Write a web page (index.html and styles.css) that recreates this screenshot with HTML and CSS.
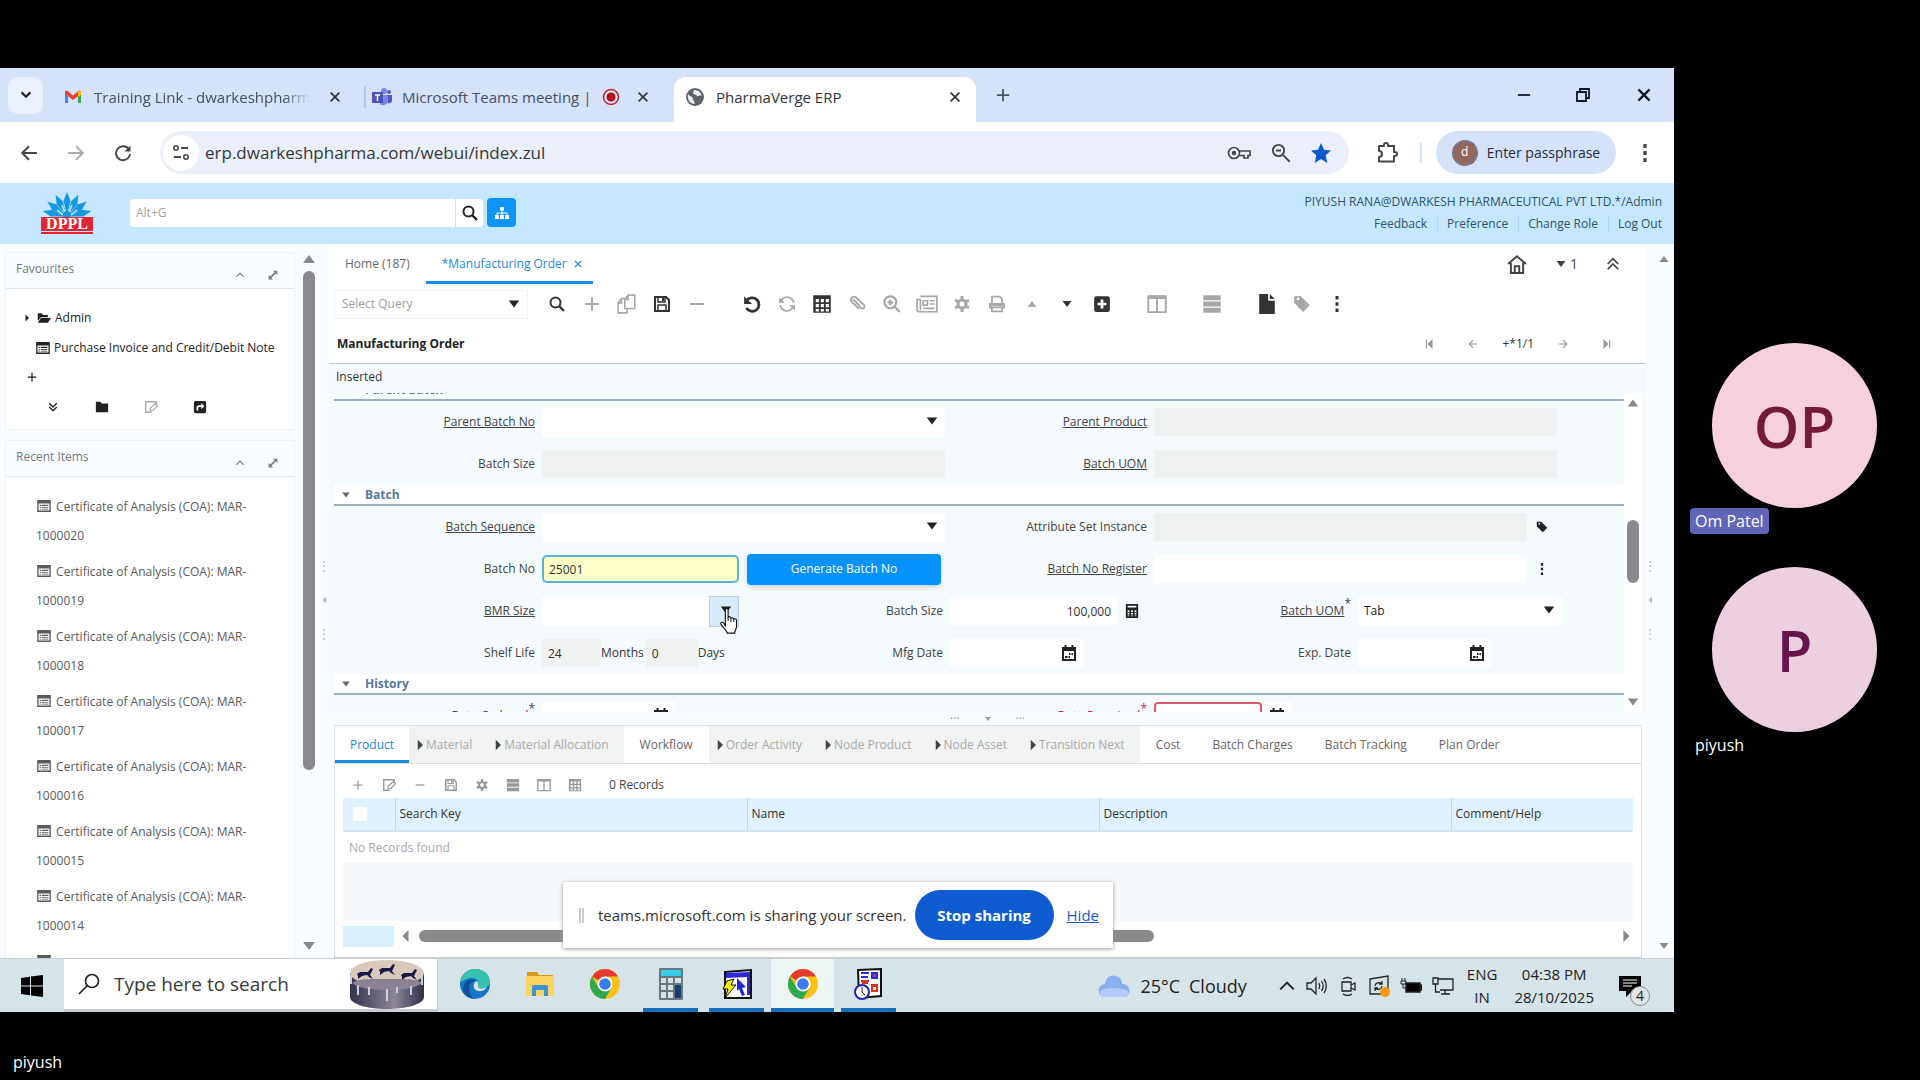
FILE: index.html
```html
<!DOCTYPE html>
<html lang="en">
<head>
    <meta charset="UTF-8">
    <meta name="viewport" content="width=device-width, initial-scale=1.0">
    <title>PharmaVerge ERP</title>
    <link rel="stylesheet" href="styles.css">
</head>
<body>
    <svg class="sprite" aria-hidden="true">
        <symbol id="x" viewBox="0 0 16 16"><path d="M3 3l10 10M13 3L3 13" fill="none" stroke="currentColor" stroke-width="2"/></symbol>
        <symbol id="plus" viewBox="0 0 16 16"><path d="M8 1v14M1 8h14" fill="none" stroke="currentColor" stroke-width="2"/></symbol>
        <symbol id="minus" viewBox="0 0 16 16"><path d="M1 8h14" stroke="currentColor" stroke-width="2"/></symbol>
        <symbol id="down" viewBox="0 0 16 16"><path d="M2 4h12l-6 8z" fill="currentColor"/></symbol>
        <symbol id="up" viewBox="0 0 16 16"><path d="M2 12h12L8 4z" fill="currentColor"/></symbol>
        <symbol id="right" viewBox="0 0 16 16"><path d="M5 1v14l7-7z" fill="currentColor"/></symbol>
        <symbol id="left" viewBox="0 0 16 16"><path d="M12 1v14L5 8z" fill="currentColor"/></symbol>
        <symbol id="search" viewBox="0 0 16 16"><circle cx="6.5" cy="6.5" r="5" fill="none" stroke="currentColor" stroke-width="2"/><path d="M10 10l5 5" stroke="currentColor" stroke-width="2.4"/></symbol>
        <symbol id="zoomin" viewBox="0 0 16 16"><circle cx="6.5" cy="6.5" r="5.3" fill="none" stroke="currentColor" stroke-width="2"/><path d="M10 10l5 5M4 6.500h5M6.500 4v5" stroke="currentColor" stroke-width="2"/></symbol>
        <symbol id="zoomout" viewBox="0 0 16 16"><circle cx="6" cy="6" r="4.500" fill="none" stroke="currentColor" stroke-width="1.500"/><path d="M9.500 9.500l5.500 5.500M4 6h4" stroke="currentColor" stroke-width="1.500"/></symbol>
        <symbol id="copy" viewBox="0 0 18 18"><path d="M7 5L10 1h6v12H7zM7 5h3V1M7 4L4 4 1 8v9h8v-4M1 8h3V4" fill="none" stroke="currentColor" stroke-width="1.400"/></symbol>
        <symbol id="save" viewBox="0 0 16 16"><path d="M1 1h11l3 3v11H1z" fill="none" stroke="currentColor" stroke-width="2"/><path d="M4 1v5h7V1M4 15V9h8v6" fill="none" stroke="currentColor" stroke-width="1.500"/><path d="M8 2h2v3H8z" fill="currentColor"/></symbol>
        <symbol id="undo" viewBox="0 0 16 16"><path d="M3 5.500a6 6 0 1 1 0 6" fill="none" stroke="currentColor" stroke-width="2.500"/><path d="M1 1v7h7z" fill="currentColor"/></symbol>
        <symbol id="refresh" viewBox="0 0 16 16"><path d="M14 7A6 6 0 0 0 3.500 4L2 6M2 9a6 6 0 0 0 10.500 3L14 10" fill="none" stroke="currentColor" stroke-width="1.600"/><path d="M1 2v5h5zM15 14V9h-5z" fill="currentColor"/></symbol>
        <symbol id="grid" viewBox="0 0 16 16"><path fill-rule="evenodd" d="M1 1h14v14H1zM3 4v2.500h2.500V4zM7 4v2.500h2.500V4zM11 4v2.500h2.500V4zM3 8v2.500h2.500V8zM7 8v2.500h2.500V8zM11 8v2.500h2.500V8zM3 12v2h2.500v-2zM7 12v2h2.500v-2zM11 12v2h2.500v-2z" fill="currentColor"/></symbol>
        <symbol id="clip" viewBox="0 0 16 16"><path d="M4 3l8 9a2 2 0 0 0 3-3L7 1.500A3 3 0 0 0 3 6l7 7M6 5l5 5" fill="none" stroke="currentColor" stroke-width="1.800"/></symbol>
        <symbol id="news" viewBox="0 0 20 16"><path d="M4 1h15v14H3a2 2 0 0 1-2-2V4h3v10M6.500 5h4v4h-4zM12.500 5H17M12.500 8H17M6.500 12H17" fill="none" stroke="currentColor" stroke-width="1.500"/></symbol>
        <symbol id="gear" viewBox="0 0 16 16"><circle cx="8" cy="8" r="4" fill="none" stroke="currentColor" stroke-width="3"/><path d="M8 0v4M8 12v4M1 4l3.500 2M11.500 10L15 12M1 12l3.500-2M11.500 6L15 4" stroke="currentColor" stroke-width="3"/></symbol>
        <symbol id="print" viewBox="0 0 16 16"><path d="M3.500 8V1.500h7l2 2V8M3.500 11h9v3.500h-9z" fill="none" stroke="currentColor" stroke-width="1.600"/><path d="M1 7h14v5h-2v-2H3v2H1z" fill="currentColor"/></symbol>
        <symbol id="plusbox" viewBox="0 0 16 16"><rect x="1" y="1" width="14" height="14" rx="2" fill="currentColor"/><path d="M8 4v8M4 8h8" stroke="#fff" stroke-width="2.400"/></symbol>
        <symbol id="columns" viewBox="0 0 16 16"><path d="M1 2h14v12.500H1zM8 3v11" fill="none" stroke="currentColor" stroke-width="1.500"/><path d="M1 1h14v3H1z" fill="currentColor"/></symbol>
        <symbol id="rows" viewBox="0 0 16 16"><path d="M1 1h14v4H1zM1 6h14v4H1zM1 11h14v4H1z" fill="currentColor"/></symbol>
        <symbol id="file" viewBox="0 0 16 18"><path d="M1 0h8v6h6v12H1zM10.500 0L15 4.500h-4.500z" fill="currentColor"/></symbol>
        <symbol id="tag" viewBox="0 0 16 16"><path fill-rule="evenodd" d="M1 1h6l8 8-6 6-8-8zM3.500 2.500v2h2v-2z" fill="currentColor"/></symbol>
        <symbol id="dots" viewBox="0 0 16 16"><path d="M8 0v3.500M8 6.200v3.500M8 12.500V16" stroke="currentColor" stroke-width="3"/></symbol>
        <symbol id="card" viewBox="0 0 16 14"><path d="M1 1h14v12H1z" fill="none" stroke="currentColor" stroke-width="1.500"/><path d="M1 1h14v3H1zM3 5.500h1.500V7H3zM3 8h1.500v1H3zM3 10h1.500v1H3zM5.500 5.500H13V7H5.500zM5.500 8H13v1H5.500zM5.500 10H13v1H5.500z" fill="currentColor"/></symbol>
        <symbol id="chev2" viewBox="0 0 16 16"><path d="M2 8l6-6 6 6M2 14l6-6 6 6" fill="none" stroke="currentColor" stroke-width="2"/></symbol>
        <symbol id="chev" viewBox="0 0 16 16"><path d="M2 11l6-6 6 6" fill="none" stroke="currentColor" stroke-width="1.800"/></symbol>
        <symbol id="expand" viewBox="0 0 16 16"><path d="M8 1h7v7zM1 8v7h7z" fill="currentColor"/><path d="M3 13L13 3" stroke="currentColor" stroke-width="2.600"/></symbol>
        <symbol id="folder" viewBox="0 0 16 14"><path d="M1 1h5l2 2h7v10H1z" fill="currentColor"/></symbol>
        <symbol id="folderopen" viewBox="0 0 18 14"><path d="M1 1h5l2 2h6v3H5l-4 5zM5 7h13l-4 6H1z" fill="currentColor"/></symbol>
        <symbol id="edit" viewBox="0 0 16 16"><path d="M9 14H2V2h12v4" fill="none" stroke="currentColor" stroke-width="1.600"/><path d="M7 12V9.500L13 4l2.500 2.500L10 12z" fill="none" stroke="currentColor" stroke-width="1.400"/></symbol>
        <symbol id="share" viewBox="0 0 16 16"><rect x="1" y="1" width="14" height="14" rx="2" fill="currentColor"/><path d="M5 12V9a2 2 0 0 1 2-2h3" fill="none" stroke="#fff" stroke-width="2"/><path d="M9.500 3.500L13 7l-3.500 3.500z" fill="#fff"/></symbol>
        <symbol id="home" viewBox="0 0 18 18"><path d="M1 9l8-7 8 7M3.500 8v9h11V8M7 17v-6h4v6" fill="none" stroke="currentColor" stroke-width="1.800"/></symbol>
        <symbol id="arrowl" viewBox="0 0 16 16"><path d="M15 8H2M8 2L2 8l6 6" fill="none" stroke="currentColor" stroke-width="1.800"/></symbol>
        <symbol id="arrowr" viewBox="0 0 16 16"><path d="M1 8h13M8 2l6 6-6 6" fill="none" stroke="currentColor" stroke-width="1.800"/></symbol>
        <symbol id="first" viewBox="0 0 16 16"><path d="M4.500 2v12M12 3v10L7 8z" fill="currentColor" stroke="currentColor" stroke-width="1.500"/></symbol>
        <symbol id="last" viewBox="0 0 16 16"><path d="M11.500 2v12M4 3v10l5-5z" fill="currentColor" stroke="currentColor" stroke-width="1.500"/></symbol>
        <symbol id="calc" viewBox="0 0 16 16"><path fill-rule="evenodd" d="M1 0h14v16H1zM3 2v2h10V2zM3 7v2h2V7zM7 7v2h2V7zM11 7v2h2V7zM3 10v2h2v-2zM7 10v2h2v-2zM11 10v2h2v-2zM3 13v1h2v-1zM7 13v1h2v-1zM11 13v1h2v-1z" fill="currentColor"/></symbol>
        <symbol id="cal" viewBox="0 0 16 16"><path fill-rule="evenodd" d="M1 2h2.500V0h2v2h5V0h2v2H15v14H1zM3 6v8h10V6z" fill="currentColor"/><path d="M4 11h2.500v2H4zM7.500 11h1.500v2H7.500zM8 8h1.500v2H8zM10.500 8H12v2h-1.500z" fill="currentColor"/></symbol>
        <symbol id="chrome" viewBox="0 0 32 32"><circle cx="16" cy="16" r="15" fill="#fbc116"/><path d="M16 16L3 8.500A15 15 0 0 1 29 8.500H16z" fill="#e33b2e"/><path d="M3 8.500A15 15 0 0 0 16 31l6.500-11.300L16 16 9.500 19.700z" fill="#2da94f"/><circle cx="16" cy="16" r="7.500" fill="#fff"/><circle cx="16" cy="16" r="5.800" fill="#3b7ded"/></symbol>
    </svg>

    <div class="meeting">
        <main class="screen">
            <!-- browser -->
            <div class="tabstrip">
                <button class="tab-search" aria-label="Search tabs"><svg class="flip s14" viewBox="0 0 16 16"><path d="M3 11l5-5 5 5" fill="none" stroke="currentColor" stroke-width="2.500"/></svg></button>
                <div class="btab first">
                    <svg class="s18" viewBox="0 0 18 14"><path d="M1 2v11h3V6z" fill="#4285f4"/><path d="M17 2v11h-3V6z" fill="#34a853"/><path d="M1 3V1l2-.500 6 5 6-5 2 .500v3L9 10 1 4z" fill="#ea4335"/><path d="M14 2l2-1.500L17 2v3l-3 2z" fill="#fbbc04"/></svg>
                    <span class="btab-name fade">Training Link - dwarkeshpharma</span>
                    <button aria-label="Close tab"><svg class="s14"><use href="#x"/></svg></button>
                </div>
                <div class="btab second">
                    <svg class="s20" viewBox="0 0 20 20"><circle cx="12" cy="4" r="3" fill="#7b83eb"/><circle cx="17" cy="5" r="2" fill="#5059c9"/><path d="M8 8h8v7a5 5 0 0 1-8 2z" fill="#7b83eb"/><path d="M16 8h4v6a3 3 0 0 1-4 2z" fill="#5059c9"/><rect y="5" width="11" height="11" rx="1" fill="#4b53bc"/><path d="M3 8h5M5.500 8v6" stroke="#fff" stroke-width="1.500"/></svg>
                    <span class="btab-name">Microsoft Teams meeting |</span>
                    <svg class="s18 rec" viewBox="0 0 18 18"><circle cx="9" cy="9" r="7.500" fill="none" stroke="#c5222a" stroke-width="1.500"/><circle cx="9" cy="9" r="4.500" fill="#b3141c"/></svg>
                    <button aria-label="Close tab"><svg class="s14"><use href="#x"/></svg></button>
                </div>
                <div class="btab active">
                    <svg class="s20" viewBox="0 0 20 20"><circle cx="10" cy="10" r="9" fill="#5f6368"/><path d="M3 7c2 3 5 2 5 5l2 5C5 17 2 13 3 7zM9 3c4 0 7 2 8 6-2-2-3 1-5 0-1-2-4-1-4-3z" fill="#e8eaed"/></svg>
                    <span class="btab-name">PharmaVerge ERP</span>
                    <button aria-label="Close tab"><svg class="s14"><use href="#x"/></svg></button>
                </div>
                <button class="newtab" aria-label="New tab"><svg class="s14"><use href="#plus"/></svg></button>
                <div class="winbtns">
                    <button aria-label="Minimise"><svg class="s14"><use href="#minus"/></svg></button>
                    <button aria-label="Restore"><svg class="s14" viewBox="0 0 14 14"><path d="M1 4h9v9H1zM4 4V1h9v9h-3" fill="none" stroke="#101828" stroke-width="1.800"/></svg></button>
                    <button aria-label="Close"><svg class="s18"><use href="#x"/></svg></button>
                </div>
            </div>
            <div class="navbar">
                <div class="navbtns">
                    <button aria-label="Back"><svg class="s18"><use href="#arrowl"/></svg></button>
                    <button aria-label="Forward" class="off"><svg class="s18"><use href="#arrowr"/></svg></button>
                    <button aria-label="Reload"><svg class="s18" viewBox="0 0 18 18"><path d="M15 5.500A7 7 0 1 0 16 10" fill="none" stroke="currentColor" stroke-width="1.900"/><path d="M16.500 1.500v6h-6z" fill="currentColor"/></svg></button>
                </div>
                <div class="omnibox">
                    <button class="tune" aria-label="Site information"><svg class="s18" viewBox="0 0 18 18"><path d="M9 4h7M2 13h7" stroke="currentColor" stroke-width="2"/><circle cx="4" cy="4" r="2.200" fill="none" stroke="currentColor" stroke-width="1.600"/><circle cx="14" cy="13" r="2.200" fill="none" stroke="currentColor" stroke-width="1.600"/></svg></button>
                    <input type="text" aria-label="Address" value="erp.dwarkeshpharma.com/webui/index.zul">
                    <button aria-label="Passwords"><svg class="key" viewBox="0 0 24 14"><circle cx="7" cy="7" r="5.500" fill="none" stroke="currentColor" stroke-width="1.700"/><circle cx="7" cy="7" r="2.200" fill="currentColor"/><path d="M12 5h11v4.500h-2V12h-4V9.500h-5" fill="none" stroke="currentColor" stroke-width="1.700"/></svg></button>
                    <button aria-label="Zoom"><svg class="s20"><use href="#zoomout"/></svg></button>
                    <button aria-label="Bookmark" class="star"><svg class="s20" viewBox="0 0 20 20"><path d="M10 0l3 6.800 7 .7-5.300 4.800L16.300 20 10 16l-6.300 4 1.600-7.700L0 7.500l7-.7z" fill="currentColor"/></svg></button>
                </div>
                <button class="puzzle" aria-label="Extensions"><svg class="s22" viewBox="0 0 22 22"><path d="M3 4h5V3a2 2 0 0 1 4 0v1h6v6h1a2 2 0 0 1 0 4h-1v5.500H3V15c4 0 4-6 0-6z" fill="none" stroke="#444746" stroke-width="2" stroke-linejoin="round"/></svg></button>
                <button class="profile"><span class="pic">d</span>Enter passphrase</button>
                <button class="menu" aria-label="Menu"><svg class="s18"><use href="#dots"/></svg></button>
            </div>

            <!-- erp header -->
            <header class="erp-head">
                <svg class="logo" viewBox="0 0 52 42" role="img" aria-label="DPPL">
                    <g fill="#1599de"><path id="petal" d="M26 23L22.500 9 26 0l3.500 9z"/><use href="#petal" transform="rotate(27 26 25)"/><use href="#petal" transform="rotate(-27 26 25)"/><use href="#petal" transform="rotate(52 26 25)"/><use href="#petal" transform="rotate(-52 26 25)"/><use href="#petal" transform="rotate(76 26 25)"/><use href="#petal" transform="rotate(-76 26 25)"/></g>
                    <path d="M26 26L16 18M26 26l10-8M26 26l-5-13M26 26l5-13" stroke="#c6e8fe" stroke-width="1.500"/>
                    <circle cx="26" cy="23" r="4" fill="#1599de"/>
                    <path d="M0 25h52v14H0zM0 40h52v2H0z" fill="#e32636"/>
                    <text x="26" y="37" text-anchor="middle">DPPL</text>
                </svg>
                <form class="gsearch">
                    <input type="text" aria-label="Global search" placeholder="Alt+G">
                    <button type="button" aria-label="Search"><svg class="s16"><use href="#search"/></svg></button>
                </form>
                <button class="sitemap" aria-label="Menu tree"><svg class="s14" viewBox="0 0 14 12"><path d="M5 0h4v3.500H5zM0 8h4v4H0zM5 8h4v4H5zM10 8h4v4h-4z" fill="#fff"/><path d="M7 3v5M2 8V6h10v2" fill="none" stroke="#fff"/></svg></button>
                <div class="user">
                    <p>PIYUSH RANA@DWARKESH PHARMACEUTICAL PVT LTD.*/Admin</p>
                    <nav><a href="#">Feedback</a><a href="#">Preference</a><a href="#">Change Role</a><a href="#">Log Out</a></nav>
                </div>
            </header>

            <div class="desk">
                <aside class="sidebar">
                    <section class="box">
                        <h2>Favourites <span><svg class="s10"><use href="#chev"/></svg><svg class="s10"><use href="#expand"/></svg></span></h2>
                        <div class="fav">
                            <a href="#" class="fav-admin"><svg class="s8"><use href="#right"/></svg><svg class="s14"><use href="#folderopen"/></svg>Admin</a>
                            <a href="#" class="fav-doc"><svg class="s14"><use href="#card"/></svg>Purchase Invoice and Credit/Debit Note</a>
                            <button class="fav-add" aria-label="Add"><svg class="s10"><use href="#plus"/></svg></button>
                            <div class="fav-tools">
                                <button aria-label="Expand"><svg class="flip s10"><use href="#chev2"/></svg></button>
                                <button aria-label="Folder"><svg class="s14"><use href="#folder"/></svg></button>
                                <button aria-label="Edit" class="off"><svg class="s14"><use href="#edit"/></svg></button>
                                <button aria-label="Open"><svg class="s14"><use href="#share"/></svg></button>
                            </div>
                        </div>
                    </section>
                    <section class="box recent">
                        <h2>Recent Items <span><svg class="s10"><use href="#chev"/></svg><svg class="s10"><use href="#expand"/></svg></span></h2>
                        <ul>
                            <li><a href="#"><svg class="s14"><use href="#card"/></svg> Certificate of Analysis (COA): MAR-1000020</a></li>
                            <li><a href="#"><svg class="s14"><use href="#card"/></svg> Certificate of Analysis (COA): MAR-1000019</a></li>
                            <li><a href="#"><svg class="s14"><use href="#card"/></svg> Certificate of Analysis (COA): MAR-1000018</a></li>
                            <li><a href="#"><svg class="s14"><use href="#card"/></svg> Certificate of Analysis (COA): MAR-1000017</a></li>
                            <li><a href="#"><svg class="s14"><use href="#card"/></svg> Certificate of Analysis (COA): MAR-1000016</a></li>
                            <li><a href="#"><svg class="s14"><use href="#card"/></svg> Certificate of Analysis (COA): MAR-1000015</a></li>
                            <li><a href="#"><svg class="s14"><use href="#card"/></svg> Certificate of Analysis (COA): MAR-1000014</a></li>
                            <li><a href="#"><svg class="s14"><use href="#card"/></svg></a></li>
                        </ul>
                    </section>
                </aside>
                <div class="vscroll side-scroll"><svg class="s16"><use href="#up"/></svg><i></i><svg class="s16"><use href="#down"/></svg></div>
                <div class="splitter"><span>⋮</span><svg class="s8"><use href="#left"/></svg><span>⋮</span></div>

                <div class="work">
                    <div class="wtabs">
                        <a href="#">Home (187)</a>
                        <a href="#" class="on">*Manufacturing Order<svg class="s10"><use href="#x"/></svg></a>
                        <div class="wtools">
                            <button aria-label="Home"><svg class="s20"><use href="#home"/></svg></button>
                            <button><svg class="s12"><use href="#down"/></svg>1</button>
                            <button aria-label="Collapse"><svg class="s14"><use href="#chev2"/></svg></button>
                        </div>
                    </div>
                    <div class="toolbar">
                        <div class="combo query"><select aria-label="Select Query"><option>Select Query</option></select><svg class="s14"><use href="#down"/></svg></div>
                        <button aria-label="Find"><svg class="s16"><use href="#search"/></svg></button>
                        <button class="off" aria-label="New"><svg class="s16"><use href="#plus"/></svg></button>
                        <button class="off" aria-label="Copy"><svg class="s20"><use href="#copy"/></svg></button>
                        <button aria-label="Save"><svg class="s16"><use href="#save"/></svg></button>
                        <button class="off" aria-label="Delete"><svg class="s16"><use href="#minus"/></svg></button>
                        <button class="sep" aria-label="Undo"><svg class="s18"><use href="#undo"/></svg></button>
                        <button class="off" aria-label="Refresh"><svg class="s18"><use href="#refresh"/></svg></button>
                        <button aria-label="Grid"><svg class="s20"><use href="#grid"/></svg></button>
                        <button class="off" aria-label="Attachment"><svg class="s16"><use href="#clip"/></svg></button>
                        <button class="off" aria-label="Zoom"><svg class="s18"><use href="#zoomin"/></svg></button>
                        <button class="off" aria-label="Report"><svg class="s22"><use href="#news"/></svg></button>
                        <button class="off" aria-label="Process"><svg class="s16"><use href="#gear"/></svg></button>
                        <button class="off" aria-label="Print"><svg class="s18"><use href="#print"/></svg></button>
                        <button class="off" aria-label="Parent"><svg class="s12"><use href="#up"/></svg></button>
                        <button aria-label="Detail"><svg class="s12"><use href="#down"/></svg></button>
                        <button aria-label="Add record"><svg class="s18"><use href="#plusbox"/></svg></button>
                        <button class="sep off" aria-label="Columns"><svg class="s20"><use href="#columns"/></svg></button>
                        <button class="sep off" aria-label="Rows"><svg class="s20"><use href="#rows"/></svg></button>
                        <button class="sep" aria-label="Document"><svg class="s20"><use href="#file"/></svg></button>
                        <button class="off" aria-label="Label"><svg class="s18"><use href="#tag"/></svg></button>
                        <button aria-label="More"><svg class="s16"><use href="#dots"/></svg></button>
                    </div>
                    <div class="titlebar">
                        <h1>Manufacturing Order</h1>
                        <div class="pager">
                            <button aria-label="First"><svg class="s12"><use href="#first"/></svg></button>
                            <button aria-label="Previous"><svg class="s10"><use href="#arrowl"/></svg></button>
                            <span>+*1/1</span>
                            <button aria-label="Next"><svg class="s10"><use href="#arrowr"/></svg></button>
                            <button aria-label="Last"><svg class="s12"><use href="#last"/></svg></button>
                        </div>
                    </div>
                    <p class="status">Inserted</p>

                    <div class="formwrap">
                        <form class="form">
                            <h3 class="cut">Parent Batch</h3>
                            <div class="fields">
                                <label for="pbn"><u>Parent Batch No</u></label>
                                <div class="combo w2"><select id="pbn"><option></option></select><svg class="s14"><use href="#down"/></svg></div>
                                <label for="pp"><u>Parent Product</u></label>
                                <input class="w2 ro" id="pp" type="text" readonly>
                                <label for="pbs">Batch Size</label>
                                <input class="w2 ro" id="pbs" type="text" readonly>
                                <label for="pbu"><u>Batch UOM</u></label>
                                <input class="w2 ro" id="pbu" type="text" readonly>
                            </div>
                            <h3><svg class="s10"><use href="#down"/></svg>Batch</h3>
                            <div class="fields">
                                <label for="bs"><u>Batch Sequence</u></label>
                                <div class="combo w2"><select id="bs"><option></option></select><svg class="s14"><use href="#down"/></svg></div>
                                <label for="asi">Attribute Set Instance</label>
                                <div class="w2 withicon"><input class="ro" id="asi" type="text" readonly><button type="button" aria-label="Attributes"><svg class="s12"><use href="#tag"/></svg></button></div>

                                <label for="bno">Batch No</label>
                                <input class="focused" id="bno" type="text" value="25001">
                                <button type="button" class="primary">Generate Batch No</button>
                                <label for="bnr"><u>Batch No Register</u></label>
                                <div class="w2 withicon"><input id="bnr" type="text"><button type="button" aria-label="More"><svg class="s12"><use href="#dots"/></svg></button></div>

                                <label for="bmr"><u>BMR Size</u></label>
                                <div class="combo hover"><select id="bmr"><option></option></select><svg class="s14"><use href="#down"/></svg>
                                    <svg class="cursor" viewBox="0 0 22 30"><path d="M6 3c0-2 3-2 3 0v8c1-1 3-1 3 1 1-1 3 0 3 1 2-1 3 0 3 2v6c0 3-2 4-2 7H8c0-3-5-6-7-10 0-2 2-2 3-1l2 3z" fill="#fff" stroke="#111" stroke-width="1.200"/><path d="M9 11v4M12 12v4M15 13v3" stroke="#111"/></svg>
                                </div>
                                <label for="bsz">Batch Size</label>
                                <div class="withicon size"><input id="bsz" type="text" value="100,000"><button type="button" aria-label="Calculator"><svg class="s14"><use href="#calc"/></svg></button></div>
                                <label for="uom"><u>Batch UOM</u><sup>*</sup></label>
                                <div class="combo"><select id="uom"><option>Tab</option></select><svg class="s14"><use href="#down"/></svg></div>

                                <label for="slm">Shelf Life</label>
                                <div class="shelf"><input class="ro" id="slm" type="text" value="24" readonly><span>Months</span><input class="ro" type="text" value="0" aria-label="Days" readonly><span>Days</span></div>
                                <label for="mfg">Mfg Date</label>
                                <div class="withicon date"><input id="mfg" type="text"><button type="button" aria-label="Calendar"><svg class="s16"><use href="#cal"/></svg></button></div>
                                <label for="exp">Exp. Date</label>
                                <div class="withicon date"><input id="exp" type="text"><button type="button" aria-label="Calendar"><svg class="s16"><use href="#cal"/></svg></button></div>
                            </div>
                            <h3><svg class="s10"><use href="#down"/></svg>History</h3>
                            <div class="fields">
                                <label for="dto">Date Ordered<sup>*</sup></label>
                                <div class="withicon date"><input id="dto" type="text" value="28/10/2025"><button type="button" aria-label="Calendar"><svg class="s16"><use href="#cal"/></svg></button></div>
                                <label class="red promised" for="dtp">Date Promised<sup>*</sup></label>
                                <div class="withicon date"><input class="error" id="dtp" type="text"><button type="button" aria-label="Calendar"><svg class="s16"><use href="#cal"/></svg></button></div>
                            </div>
                        </form>
                        <div class="vscroll form-scroll"><svg class="s14"><use href="#up"/></svg><i></i><svg class="s14"><use href="#down"/></svg></div>
                    </div>
                    <div class="hsplit"><span>···</span><svg class="s8"><use href="#down"/></svg><span>···</span></div>

                    <section class="detail">
                        <nav class="dtabs">
                            <a href="#" class="on">Product</a>
                            <a href="#" class="dis"><svg class="s12"><use href="#right"/></svg>Material</a>
                            <a href="#" class="dis"><svg class="s12"><use href="#right"/></svg>Material Allocation</a>
                            <a href="#" class="wf">Workflow</a>
                            <a href="#" class="dis"><svg class="s12"><use href="#right"/></svg>Order Activity</a>
                            <a href="#" class="dis"><svg class="s12"><use href="#right"/></svg>Node Product</a>
                            <a href="#" class="dis"><svg class="s12"><use href="#right"/></svg>Node Asset</a>
                            <a href="#" class="dis"><svg class="s12"><use href="#right"/></svg>Transition Next</a>
                            <a href="#">Cost</a>
                            <a href="#">Batch Charges</a>
                            <a href="#">Batch Tracking</a>
                            <a href="#">Plan Order</a>
                        </nav>
                        <div class="dtools">
                            <button aria-label="New"><svg class="s10"><use href="#plus"/></svg></button>
                            <button aria-label="Edit"><svg class="s14"><use href="#edit"/></svg></button>
                            <button aria-label="Delete"><svg class="s10"><use href="#minus"/></svg></button>
                            <button aria-label="Save"><svg class="s12"><use href="#save"/></svg></button>
                            <button aria-label="Process"><svg class="s12"><use href="#gear"/></svg></button>
                            <button aria-label="Rows"><svg class="s14"><use href="#rows"/></svg></button>
                            <button aria-label="Columns"><svg class="s14"><use href="#columns"/></svg></button>
                            <button aria-label="Grid"><svg class="s14"><use href="#grid"/></svg></button>
                            <span>0 Records</span>
                        </div>
                        <table>
                            <thead>
                                <tr><th class="chk"><input type="checkbox" aria-label="Select all"></th><th>Search Key</th><th>Name</th><th>Description</th><th class="last">Comment/Help</th></tr>
                            </thead>
                            <tbody>
                                <tr><td colspan="5">No Records found</td></tr>
                            </tbody>
                        </table>
                        <div class="blank"></div>
                        <div class="hscroll"><b></b><svg class="s14"><use href="#left"/></svg><i></i><svg class="s14"><use href="#right"/></svg></div>
                    </section>
                </div>
                <div class="splitter narrow"><span>⋮</span><svg class="s8"><use href="#left"/></svg><span>⋮</span></div>
                <div class="vscroll page-scroll"><svg class="s12"><use href="#up"/></svg><svg class="s12"><use href="#down"/></svg></div>
            </div>

            <div class="sharing" role="dialog" aria-label="Screen sharing">
                <i></i>
                <span>teams.microsoft.com is sharing your screen.</span>
                <button>Stop sharing</button>
                <a href="#">Hide</a>
            </div>

            <!-- windows taskbar -->
            <footer class="taskbar">
                <button class="start" aria-label="Start"><svg class="s22" viewBox="0 0 22 22"><path d="M0 3l9-1.300V10.500H0zM10 1.500L22 0v10.500H10zM0 11.500h9v8.800L0 19zM10 11.500h12V22l-12-1.500z"/></svg></button>
                <div class="tsearch">
                    <svg class="s22" viewBox="0 0 22 22"><circle cx="14" cy="8" r="6.500" fill="none" stroke="#222" stroke-width="1.700"/><path d="M9.500 12.500L1 21" stroke="#222" stroke-width="1.700"/></svg>
                    <input type="text" aria-label="Type here to search" placeholder="Type here to search">
                    <svg class="cake" viewBox="0 0 76 50">
                        <defs><linearGradient id="cakeg"><stop offset="0" stop-color="#34344f"/><stop offset=".6" stop-color="#8d8696"/><stop offset="1" stop-color="#2e2f4c"/></linearGradient></defs>
                        <path d="M1 14v24c0 7 17 12 37 12s37-5 37-12V14z" fill="url(#cakeg)"/>
                        <ellipse cx="38" cy="14" rx="37" ry="13" fill="#d9c9bb"/>
                        <path d="M3 24c6-5 20-4 35-4s29-1 35 4c-6 5-20 7-35 7S9 29 3 24z" fill="#8b8391"/>
                        <path d="M2 16v9M9 26v10M20 28v8M38 30v12M48 28v6M62 27v9M73 17v9" stroke="#c9cfe0" stroke-width="2"/>
                        <path id="horse" d="M8 15l3-2h8l3-4 2 1-3 6 3 4-4-2-2-2-5 1-4 3v-3z" fill="#1b1b4a"/><use href="#horse" x="22" y="-4"/><use href="#horse" x="44" y="1"/>
                    </svg>
                </div>
                <div class="apps">
                    <button aria-label="Edge"><svg class="s32" viewBox="0 0 32 32"><circle cx="16" cy="16" r="15" fill="#1673c4"/><path d="M1 15C2 6 9 1 16 1c9 0 15 6 15 12 0 5-4 7-8 7-3 0-4-1-4-2 2-3 0-8-6-8-5 0-9 2-12 5z" fill="#36c2ae"/><path d="M10 20c0-5 4-8 8-7-3-2-9-2-12 2-5 7 0 15 9 16-3-2-5-6-5-11z" fill="#0f4f9e"/><path d="M19 18c0 3 5 3 9 1-3 5-10 6-13 1-1-3 0-6 3-7 1 1 2 3 1 5z" fill="#d6e6ee"/></svg></button>
                    <button aria-label="File Explorer"><svg class="s30" viewBox="0 0 30 30"><path d="M2 3h10l2 3h14v4H2z" fill="#d99a1c"/><path d="M1 7h28v20H1z" fill="#fcd462"/><path d="M7 27v-9a2 2 0 0 1 2-2h12a2 2 0 0 1 2 2v9h-4v-6h-8v6z" fill="#3a92dc"/></svg></button>
                    <button aria-label="Chrome"><svg class="s32"><use href="#chrome"/></svg></button>
                    <button aria-label="Calculator" class="run"><svg class="s32" viewBox="0 0 32 32"><rect x="4" width="24" height="32" rx="1" fill="#697780"/><path d="M6 2h20v6H6z" fill="#36cbe6"/><path d="M6 10h5v5H6zM13 10h5v5h-5zM20 10h6v5h-6zM6 17h5v5H6zM13 17h5v5h-5zM6 24h5v6H6zM13 24h5v6h-5z" fill="#d9e0e4"/><path d="M20 17h6v13h-6z" fill="#163f70"/></svg></button>
                    <button aria-label="Remote" class="run"><svg class="s32" viewBox="0 0 32 32"><path d="M4 4l26-2v28H4z" fill="#fff" stroke="#111" stroke-width="2"/><path d="M5 5l24-1v23h-3V9L5 10z" fill="#2929d8"/><path d="M16 10l9 9-4 1 3 7-3 1-3-7-2 2z" fill="#2323dd"/><path d="M6 13l7-2-3 6h5L4 30l3-9H2z" fill="#f4f000" stroke="#111"/></svg></button>
                    <button aria-label="Chrome" class="run cur"><svg class="s32"><use href="#chrome"/></svg></button>
                    <button aria-label="Planner" class="run"><svg class="s32" viewBox="0 0 32 32"><path d="M5 2l23-1v27l-22 2z" fill="#fff" stroke="#111" stroke-width="2"/><path d="M8 5h8M8 9h7M8 13h8" stroke="#2b2be0" stroke-width="2"/><path d="M18 4h7v7h-7z" fill="#2b2be0"/><path d="M20 6h3v3h-3zM9 12h6v4H9zM18 16h7v8h-7z" fill="#e62d1e"/><path d="M20 19h3v3h-3z" fill="#fff"/><circle cx="9" cy="24" r="7" fill="#fff" stroke="#2121bd" stroke-width="2"/><path d="M9 19v5l3 3" fill="none" stroke="#111"/></svg></button>
                </div>
                <div class="weather">
                    <svg viewBox="0 0 32 24"><path d="M7 23a6 6 0 0 1 0-13C8 3 13 0 18 2c4 1 6 4 6 8 9-1 10 13 1 13z" fill="#8bb0f0"/><path d="M2 17c6-4 20-4 28 0 1 3-2 6-5 6H7c-3 0-5-2-5-6z" fill="#b5cbfb"/></svg>
                    <span>25°C&ensp;Cloudy</span>
                </div>
                <div class="tray">
                    <svg class="s18"><use href="#chev"/></svg>
                    <svg class="s22" viewBox="0 0 22 22"><path d="M1 8h4l5-5v16l-5-5H1zM13 8c1 2 1 4 0 6M15.500 6c2 3 2 7 0 10M18 4c3 4 3 10 0 14" fill="none" stroke="#222" stroke-width="1.300"/></svg>
                    <svg class="s20" viewBox="0 0 20 20"><path d="M4 6h9v9H4zM13 9l4-2v7l-4-2M5 3c3-2 6-2 9 0M5 18c3 2 6 2 9 0" fill="none" stroke="#222" stroke-width="1.300"/></svg>
                    <svg class="s22" viewBox="0 0 22 22"><path d="M2 4l18-3v18H2zM7 11a4 4 0 0 1 7-2M14 11a4 4 0 0 1-7 2M14 6v3h-3M7 16v-3h3" fill="none" stroke="#222" stroke-width="1.300"/><circle cx="17" cy="17" r="5" fill="#f79812"/></svg>
                    <svg class="s22" viewBox="0 0 22 22"><path d="M6 8h14v9H6zM20 10h2v5h-2" stroke="#222" stroke-width="1.500"/><path d="M2 3v3M5 3v3M1 6h5v3H1zM3 9v4h3" fill="none" stroke="#222"/></svg>
                    <svg class="s22" viewBox="0 0 22 22"><path d="M6 4h15v11H8M13 15v4M9 19h9M1 3h5v6H1zM3.500 9v8H8" fill="none" stroke="#222" stroke-width="1.300"/></svg>
                </div>
                <div class="lang"><span>ENG</span><span>IN</span></div>
                <div class="clock"><span>04:38 PM</span><span>28/10/2025</span></div>
                <button class="note" aria-label="Notifications"><svg class="s22" viewBox="0 0 22 22"><path d="M0 1h22v15H13l-6 6v-6H0z"/><path d="M4 5h14M4 8h14M4 11h9" stroke="#fff"/></svg><b>4</b></button>
            </footer>
        </main>

        <aside class="people">
            <figure><div class="avatar op">OP</div><figcaption class="talking">Om Patel</figcaption></figure>
            <figure><div class="avatar p">P</div><figcaption>piyush</figcaption></figure>
        </aside>
    </div>
    <p class="presenter">piyush</p>
</body>
</html>
```
FILE: styles.css
```css
* {
    box-sizing: border-box;
}
body {
    margin: 0;
    min-height: 100vh;
    display: flex;
    flex-direction: column;
    background: #000;
    color: #333;
    font: 12px/20px "Open Sans", "Noto Sans", sans-serif;
    overflow: hidden;
}
button, input, select {
    font: inherit;
    color: inherit;
    margin: 0;
    padding: 0;
    border: 0;
    background: none;
    min-width: 0;
}
button {
    display: flex;
    align-items: center;
    justify-content: center;
}
a {
    color: inherit;
    text-decoration: none;
}
h1, h2, h3, p, ul, figure {
    margin: 0;
    padding: 0;
}
svg {
    flex: none;
    display: block;
}
.sprite {
    position: absolute;
    width: 0;
    height: 0;
}
.s8 { width: 8px; height: 8px; }
.s10 { width: 10px; height: 10px; }
.s12 { width: 12px; height: 12px; }
.s14 { width: 14px; height: 14px; }
.s16 { width: 16px; height: 16px; }
.s18 { width: 18px; height: 18px; }
.s20 { width: 20px; height: 20px; }
.s22 { width: 22px; height: 22px; }
.s30 { width: 30px; height: 30px; }
.s32 { width: 32px; height: 32px; }
.flip { transform: scaleY(-1); }

.meeting {
    display: flex;
    margin-top: 68px;
    height: calc(100vh - 136px);
}
.screen {
    position: relative;
    flex: 1;
    min-width: 0;
    display: flex;
    flex-direction: column;
    background: #fafdff;
}

/* browser */
.tabstrip {
    height: 54px;
    display: flex;
    align-items: center;
    background: #d5e2fa;
    padding-left: 8px;
    font-size: 15px;
    color: #46506a;
}
.tab-search {
    width: 35px;
    height: 37px;
    border-radius: 10px;
    background: #eaf1fd;
    color: #1f2329;
}
.btab {
    display: flex;
    align-items: center;
    gap: 12px;
    height: 45px;
    align-self: flex-end;
    padding-bottom: 6px;
}
.btab button {
    margin-left: auto;
    color: #30363f;
}
.btab-name {
    white-space: nowrap;
    overflow: hidden;
}
.fade {
    mask-image: linear-gradient(to right, #000 88%, transparent);
}
.first {
    width: 292px;
    margin: 0 18px 0 21px;
    padding-right: 14px;
}
.first .btab-name {
    width: 218px;
}
.first button {
    margin-left: 6px;
}
.second {
    width: 283px;
    gap: 10px;
    padding-right: 5px;
    margin-left: -2px;
}
.second::before {
    content: "";
    width: 2px;
    height: 22px;
    margin-right: -4px;
    margin-left: -8px;
    background: #b9c7e6;
}
.second .btab-name {
    width: 190px;
}
.active {
    width: 302px;
    margin-left: 19px;
    padding: 0 14px 6px 11px;
    border-radius: 12px 12px 0 0;
    background: #fff;
    color: #30343c;
    gap: 11px;
}
.newtab {
    margin-left: 20px;
}
.winbtns {
    margin-left: auto;
    display: flex;
    gap: 45px;
    padding-right: 21px;
    color: #101828;
}
.navbar {
    height: 61px;
    display: flex;
    align-items: center;
    background: #fff;
    color: #444746;
    padding: 0 20px;
}
.navbtns {
    display: flex;
    gap: 29px;
    width: 140px;
}
.navbtns .off {
    color: #a9abad;
}
.omnibox {
    flex: 1;
    height: 43px;
    display: flex;
    align-items: center;
    gap: 20px;
    padding: 0 18px 0 3px;
    border-radius: 22px;
    background: #ebeff9;
}
.omnibox .tune {
    width: 36px;
    height: 36px;
    border-radius: 50%;
    background: #fff;
    margin-right: -14px;
}
.omnibox input {
    flex: 1;
    font-size: 17px;
    color: #333840;
}
.key {
    width: 24px;
    height: 14px;
}
.star {
    color: #0b57d0;
}
.puzzle {
    padding: 0 21px 0 27px;
}
.profile {
    height: 43px;
    width: 180px;
    margin-left: 17px;
    border-radius: 22px;
    gap: 9px;
    background: #d5e2fa;
    font-size: 14px;
    color: #1e2a45;
    position: relative;
}
.profile::before {
    content: "";
    position: absolute;
    left: -16px;
    width: 2px;
    height: 20px;
    background: #d5e2fa;
}
.pic {
    width: 26px;
    height: 26px;
    border-radius: 50%;
    border: 2px dashed #6b7fae;
    background: #93675a;
    color: #fff;
    font-size: 12px;
    line-height: 20px;
}
.menu {
    margin-left: 20px;
}

/* erp header */
.erp-head {
    height: 61px;
    display: flex;
    align-items: center;
    background: #c6e8fe;
    padding: 0 12px 2px 41px;
    color: #31526b;
}
.logo {
    width: 52px;
    height: 42px;
}
.logo text {
    font: bold 16px "Liberation Serif", serif;
    fill: #fff;
}
.gsearch {
    display: flex;
    width: 353px;
    height: 28px;
    margin-left: 37px;
    border-radius: 4px;
    background: #fff;
    color: #222;
}
.gsearch input {
    flex: 1;
    padding: 0 6px;
}
.gsearch button {
    width: 28px;
    border-left: 1px solid #ddd;
}
::placeholder {
    color: #a3a3a3;
    opacity: 1;
}
.sitemap {
    width: 29px;
    height: 29px;
    margin-left: 4px;
    border-radius: 4px;
    background: #0d94fb;
}
.user {
    margin-left: auto;
    text-align: right;
    line-height: 22px;
}
.user nav {
    display: flex;
    align-items: center;
    justify-content: flex-end;
}
.user a + a {
    margin-left: 10px;
    padding-left: 9px;
    border-left: 1px solid #b4d8ef;
    line-height: 16px;
}

.desk {
    flex: 1;
    min-height: 0;
    display: flex;
}

/* sidebar */
.sidebar {
    width: 300px;
    padding: 8px 5px 0;
    overflow: hidden;
}
.box {
    border: 1px solid #eef2f5;
    background: #fff;
    margin-bottom: 10px;
}
.box h2 {
    display: flex;
    justify-content: space-between;
    height: 36px;
    padding: 6px 16px 0 10px;
    border-bottom: 1px solid #dfe8ec;
    background: #fafdff;
    font-size: 12px;
    font-weight: normal;
    color: #767a7d;
}
.box h2 span {
    display: flex;
    align-items: center;
    gap: 23px;
    padding-top: 2px;
}
.fav {
    height: 140px;
    padding-top: 14px;
    color: #222;
}
.fav a {
    display: flex;
    align-items: center;
    height: 30px;
    gap: 4px;
    white-space: nowrap;
}
.fav-admin {
    padding-left: 17px;
}
.fav-doc {
    padding-left: 30px;
}
.fav-admin .s14 {
    margin-left: 2px;
}
.fav-add {
    height: 28px;
    margin-left: 21px;
}
.fav-tools {
    display: flex;
    padding-left: 22px;
}
.fav-tools button {
    width: 49px;
    height: 32px;
}
.off {
    color: #a8a8a8;
}
.recent ul {
    list-style: none;
    padding: 15px 25px 0 30px;
    color: #5a5a5a;
}
.recent li {
    line-height: 29px;
    margin-bottom: 7px;
}
.recent li svg {
    display: inline-block;
    vertical-align: -2px;
    margin: 0 2px 0 1px;
}
.vscroll {
    display: flex;
    flex-direction: column;
    align-items: center;
    color: #8a8a8a;
}
.vscroll i {
    width: 12px;
    border-radius: 6px;
    background: #8a8a8c;
}
.vscroll svg:last-child {
    margin-top: auto;
}
.side-scroll {
    width: 18px;
    padding: 7px 0 4px;
}
.side-scroll i {
    height: 71%;
    margin-top: 4px;
}
.splitter {
    width: 11px;
    display: flex;
    flex-direction: column;
    align-items: center;
    gap: 20px;
    padding-top: 312px;
    color: #bbb;
}
.narrow {
    width: 8px;
}

/* work area */
.work {
    flex: 1;
    min-width: 0;
    display: flex;
    flex-direction: column;
    background: #fff;
}
.wtabs {
    height: 40px;
    display: flex;
    align-items: center;
    color: #666;
}
.wtabs > a {
    display: flex;
    align-items: center;
    height: 100%;
    gap: 6px;
    padding: 2px 10px 0 16px;
    border-bottom: 3px solid transparent;
}
.wtabs .on {
    color: #1c87dc;
    border-color: #1c87dc;
    margin-left: 6px;
}
.wtools {
    margin-left: auto;
    display: flex;
    align-items: center;
    gap: 28px;
    padding-right: 26px;
    font-size: 14px;
    color: #444;
}
.wtools button {
    gap: 3px;
}
.toolbar {
    height: 40px;
    display: flex;
    align-items: center;
    padding-left: 5px;
    color: #333;
}
.toolbar button {
    width: 35px;
    height: 35px;
}
.toolbar .off {
    color: #a8a8a8;
}
.toolbar .sep {
    margin-left: 20px;
}
.combo {
    position: relative;
    display: flex;
    align-items: center;
    height: 29px;
    background: #fff;
    color: #222;
}
.combo select {
    appearance: none;
    width: 100%;
    height: 100%;
    padding: 0 30px 0 6px;
}
.combo > .s14 {
    position: absolute;
    right: 6px;
    top: 6px;
}
.query {
    width: 194px;
    margin-right: 11px;
    border: 1px solid #f1f3f4;
}
.query select {
    color: #a0a0a0;
    padding-left: 7px;
}
.titlebar {
    height: 40px;
    display: flex;
    align-items: center;
    justify-content: space-between;
    padding: 0 33px 0 8px;
    border-bottom: 1px solid #c3c9cc;
}
h1 {
    font-size: 12px;
    color: #222;
}
.pager {
    display: flex;
    align-items: center;
    gap: 33px;
    color: #999;
}
.pager span {
    color: #333;
    margin: 0 -9px;
}
.status {
    height: 29px;
    padding: 3px 0 0 7px;
    background: #f5fafd;
}
.formwrap {
    flex: 1;
    min-height: 0;
    display: flex;
    background: #f5fafd;
}
.form {
    flex: 1;
    min-width: 0;
    overflow: hidden;
    margin-left: 5px;
}
.form h3 {
    display: flex;
    align-items: center;
    gap: 14px;
    height: 21px;
    padding-left: 7px;
    background: #fff;
    border-bottom: 2px solid #9aafc0;
    font-size: 12px;
    color: #56779d;
}
.form h3 svg {
    color: #666;
}
.form .cut {
    margin-top: -13px;
    padding-left: 31px;
    background: transparent;
}
.fields {
    display: grid;
    grid-template-columns: repeat(6, minmax(0, 1fr));
    grid-auto-rows: 42px;
    align-items: center;
    padding: 0 62px 0 4px;
}
.fields label {
    position: relative;
    text-align: right;
    padding-right: 7px;
    color: #444;
}
.fields sup {
    position: relative;
    top: -2px;
    line-height: 0;
    font-size: 12px;
}
.fields input {
    height: 28px;
    padding: 0 6px;
    background: #fff;
}
.w2 {
    grid-column: span 2;
    margin-right: 5px;
}
.fields .ro {
    background: #f0f1f1;
}
.fields .focused {
    background: #ffffc8;
    border: 2px solid #5db1d8;
    border-radius: 5px;
    margin-right: 7px;
    padding: 0 5px;
}
.primary {
    height: 31px;
    margin: 0 9px 0 1px;
    border-radius: 4px;
    background: #0492fc;
    color: #fff;
    box-shadow: 0 2px 4px #c3d6e2;
}
.withicon {
    display: flex;
}
.withicon input {
    flex: 1;
}
.withicon button {
    width: 30px;
    color: #222;
}
.size {
    margin-right: 7px;
}
.size input {
    text-align: right;
}
.date input {
    flex: 0 0 104px;
}
.date button {
    background: #fff;
}
.hover {
    margin-right: 7px;
}
.hover::after {
    content: "";
    position: absolute;
    right: 0;
    width: 28px;
    height: 29px;
    background: #d9eafb;
    border: 1px solid #b5d4f2;
}
.hover > svg {
    z-index: 1;
}
.fields .cursor {
    position: absolute;
    right: -2px;
    top: 10px;
    width: 22px;
    height: 28px;
    z-index: 2;
}
.shelf {
    display: flex;
    align-items: center;
}
.shelf input {
    width: 59px;
}
.shelf input + span + input {
    width: 54px;
    border-left: 2px solid #f5fafd;
}
.fields .red {
    color: #d0213d;
}
.promised {
    grid-column: 4;
}
.fields .error {
    border: 2px solid #e0566a;
    border-radius: 4px;
    flex-basis: 108px;
}
.form-scroll {
    width: 18px;
    margin-right: 4px;
    padding: 3px 0;
    background: #fff;
}
.form-scroll i {
    height: 20%;
    margin-top: 110px;
}
.hsplit {
    height: 13px;
    display: flex;
    justify-content: center;
    align-items: center;
    gap: 24px;
    background: #fafdff;
    color: #999;
}

/* detail panel */
.detail {
    height: 233px;
    margin: 0 4px 0 5px;
    border: 1px solid #d9dfe3;
    border-bottom-color: #ccc;
    display: flex;
    flex-direction: column;
}
.dtabs {
    display: flex;
    height: 38px;
    border-bottom: 1px solid #ddd;
    color: #666;
}
.dtabs a {
    display: flex;
    align-items: center;
    padding: 0 16px;
    white-space: nowrap;
}
.dtabs .on {
    color: #1c87dc;
    padding: 3px 15px 0;
    border-bottom: 3px solid #1c87dc;
}
.dtabs .dis {
    background: #f1f2f2;
    color: #aaa;
    padding: 0 15px 0 5px;
}
.dtabs .dis svg {
    color: #444;
}
.dtools {
    height: 34px;
    display: flex;
    align-items: center;
    padding: 7px 0 0 7px;
    color: #999;
}
.dtools button {
    width: 31px;
    height: 27px;
}
.dtools span {
    margin-left: 19px;
    color: #444;
}
.detail table {
    margin: 0 8px;
    border-collapse: collapse;
    table-layout: fixed;
    width: calc(100% - 16px);
}
th {
    height: 33px;
    padding: 0 4px;
    text-align: left;
    font-weight: normal;
    background: #e0f1fe;
    border-left: 1px solid #c2d5e4;
    border-bottom: 2px solid #d3e3f3;
}
th.chk {
    width: 52px;
    padding-left: 10px;
    border-left: 0;
}
.chk input {
    appearance: none;
    display: block;
    width: 14px;
    height: 14px;
    background: #fff;
    border-radius: 2px;
}
th.last {
    width: 182px;
}
td {
    height: 32px;
    padding: 0 6px;
    color: #a9a9a9;
}
.blank {
    flex: 1;
    margin: 0 8px;
    background: #f5f9fb;
}
.hscroll {
    height: 30px;
    margin: 0 8px 6px;
    display: flex;
    align-items: center;
    color: #8a8a8a;
}
.hscroll b {
    width: 51px;
    height: 21px;
    background: #d8f1fd;
    margin-right: 4px;
}
.hscroll i {
    width: 57%;
    height: 12px;
    margin-left: 7px;
    border-radius: 6px;
    background: #8a8a8c;
}
.hscroll svg:last-child {
    margin-left: auto;
}
.page-scroll {
    width: 20px;
    padding: 9px 0 6px;
}

.sharing {
    position: absolute;
    left: 563px;
    bottom: 64px;
    width: 550px;
    height: 66px;
    display: flex;
    align-items: center;
    padding: 0 14px 0 16px;
    background: #fff;
    box-shadow: 0 1px 4px #999;
    font-size: 15px;
    white-space: nowrap;
}
.sharing i {
    width: 5px;
    height: 15px;
    margin-right: 14px;
    border: solid #ccc;
    border-width: 0 2px;
}
.sharing button {
    width: 139px;
    height: 50px;
    margin-left: auto;
    border-radius: 25px;
    background: #0f5bd0;
    color: #fff;
    font-weight: 700;
}
.sharing a {
    margin-left: 13px;
    color: #1d5ac4;
    text-decoration: underline;
}

/* taskbar */
.taskbar {
    height: 54px;
    display: flex;
    background: #d6e4e9;
    border-top: 1px solid #c8ced2;
    color: #222;
}
.start {
    width: 64px;
}
.tsearch {
    width: 374px;
    display: flex;
    align-items: center;
    padding: 0 12px 0 14px;
    background: #fff;
    border: 1px solid #c8ced2;
    border-width: 0 1px 3px 0;
}
.tsearch input {
    flex: 1;
    height: 30px;
    padding-left: 14px;
    font-size: 19px;
}
.tsearch ::placeholder {
    color: #3a3a3a;
}
.cake {
    width: 76px;
    height: 50px;
}
.apps {
    display: flex;
    padding-left: 5px;
}
.apps button {
    width: 63px;
    margin-right: 2px;
    border-bottom: 4px solid transparent;
}
.apps .run {
    border-bottom-color: #1470b8;
    width: 55px;
    margin: 0 6px 0 5px;
}
.apps .cur {
    width: 63px;
    margin: 0 2px 0 1px;
    background: #ecf4f4;
}
.weather {
    display: flex;
    align-items: center;
    gap: 10px;
    margin-left: auto;
    font-size: 18px;
}
.weather svg {
    width: 32px;
    height: 24px;
}
.tray {
    display: flex;
    align-items: center;
    gap: 10px;
    margin-left: 31px;
}
.lang, .clock {
    display: flex;
    flex-direction: column;
    align-items: center;
    justify-content: center;
    line-height: 23px;
    font-size: 15px;
}
.lang {
    margin-left: 13px;
}
.clock {
    margin-left: 17px;
}
.note {
    position: relative;
    width: 43px;
    margin: 0 23px 0 14px;
}
.note b {
    position: absolute;
    right: 1px;
    bottom: 6px;
    width: 20px;
    height: 20px;
    border: 1px solid #888;
    border-radius: 50%;
    background: #dfe5e6;
    font-size: 14px;
    line-height: 18px;
    font-weight: normal;
}

/* participants */
.people {
    width: 246px;
    display: flex;
    flex-direction: column;
    justify-content: center;
    gap: 27px;
    padding: 26px 0 0 16px;
    color: #fff;
    font-size: 16px;
}
.people figure {
    height: 197px;
}
.avatar {
    width: 165px;
    height: 165px;
    margin-left: 22px;
    border-radius: 50%;
    font-size: 58px;
    font-weight: 600;
    line-height: 165px;
    text-align: center;
}
.op {
    background: #f6d1dc;
    color: #73193a;
}
.p {
    background: #edd0df;
    color: #66154a;
}
.people figcaption {
    display: inline-block;
    padding: 0 5px;
    line-height: 26px;
}
.people .talking {
    border-radius: 4px;
    background: #6065b8;
}
.presenter {
    margin: auto 0 8px 13px;
    color: #fff;
    font-size: 16px;
}
```
